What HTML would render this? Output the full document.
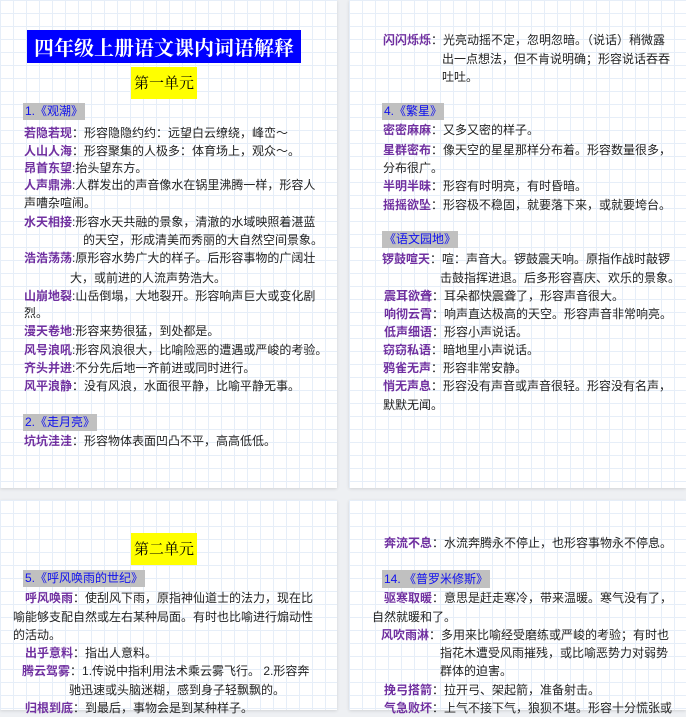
<!DOCTYPE html>
<html><head><meta charset="utf-8"><style>
body{margin:0;width:686px;height:710px;background:#eef0f3;position:relative;overflow:hidden;font-family:"Liberation Sans","Noto Sans CJK SC",sans-serif;font-size:12px;color:#222}
.p{position:absolute;background-color:#fff;background-image:linear-gradient(#e6eef8 1px,transparent 1px),linear-gradient(90deg,#e6eef8 1px,transparent 1px);background-size:13px 13px;box-shadow:0 1px 3px rgba(0,0,0,.12)}
.l{position:absolute;white-space:nowrap;line-height:18px;height:18px}
b{color:#7030a0;font-weight:bold}
.h{position:absolute;background:#c0c0c0;color:#1010ee;line-height:17px;height:17px;padding:0 2px;white-space:nowrap}
.y{position:absolute;background:#ffff00;color:#000;font-family:"Noto Serif CJK SC",serif;font-size:15px;line-height:32px;text-align:center;width:66px;height:32px;white-space:nowrap;letter-spacing:0}
</style></head><body>
<div class="p" style="left:0;top:0;width:337px;height:488px"></div>
<div class="p" style="left:349px;top:0;width:337px;height:488px"></div>
<div class="p" style="left:0;top:500px;width:337px;height:210px"></div>
<div class="p" style="left:349px;top:500px;width:337px;height:210px"></div>

<div style="position:absolute;left:27px;top:30px;width:274px;height:33px;background:#0000ff;color:#fff;font-family:'Noto Serif CJK SC',serif;font-weight:bold;font-size:20px;line-height:33px;text-align:center;white-space:nowrap;overflow:hidden">四年级上册语文课内词语解释</div>
<div class="y" style="left:131px;top:67px">第一单元</div>
<div class="h" style="left:23px;top:103px">1.《观潮》</div>
<div class="l" style="left:24px;top:124px"><b>若隐若现</b>：形容隐隐约约：远望白云缭绕，峰峦～</div>
<div class="l" style="left:24px;top:142px"><b>人山人海</b>：形容聚集的人极多：体育场上，观众～。</div>
<div class="l" style="left:24px;top:159px"><b>昂首东望</b>:抬头望东方。</div>
<div class="l" style="left:24px;top:176px"><b>人声鼎沸</b>:人群发出的声音像水在锅里沸腾一样，形容人</div>
<div class="l" style="left:24px;top:194px">声嘈杂喧闹。</div>
<div class="l" style="left:24px;top:213px"><b>水天相接</b>:形容水天共融的景象，清澈的水域映照着湛蓝</div>
<div class="l" style="left:83px;top:231px">的天空，形成清美而秀丽的大自然空间景象。</div>
<div class="l" style="left:24px;top:249px"><b>浩浩荡荡</b>:原形容水势广大的样子。后形容事物的广阔壮</div>
<div class="l" style="left:70px;top:269px">大，或前进的人流声势浩大。</div>
<div class="l" style="left:24px;top:287px"><b>山崩地裂</b>:山岳倒塌，大地裂开。形容响声巨大或变化剧</div>
<div class="l" style="left:24px;top:304px">烈。</div>
<div class="l" style="left:24px;top:322px"><b>漫天卷地</b>:形容来势很猛，到处都是。</div>
<div class="l" style="left:24px;top:341px"><b>风号浪吼</b>:形容风浪很大，比喻险恶的遭遇或严峻的考验。</div>
<div class="l" style="left:24px;top:359px"><b>齐头并进</b>:不分先后地一齐前进或同时进行。</div>
<div class="l" style="left:24px;top:377px"><b>风平浪静</b>：没有风浪，水面很平静，比喻平静无事。</div>
<div class="h" style="left:23px;top:414px">2.《走月亮》</div>
<div class="l" style="left:24px;top:432px"><b>坑坑洼洼</b>：形容物体表面凹凸不平，高高低低。</div>

<div class="l" style="left:383px;top:31px"><b>闪闪烁烁</b>：光亮动摇不定，忽明忽暗。（说话）稍微露</div>
<div class="l" style="left:442px;top:50px">出一点想法，但不肯说明确；形容说话吞吞</div>
<div class="l" style="left:442px;top:68px">吐吐。</div>
<div class="h" style="left:382px;top:103px">4.《繁星》</div>
<div class="l" style="left:383px;top:121px"><b>密密麻麻</b>：又多又密的样子。</div>
<div class="l" style="left:383px;top:141px"><b>星群密布</b>：像天空的星星那样分布着。形容数量很多，</div>
<div class="l" style="left:383px;top:159px">分布很广。</div>
<div class="l" style="left:383px;top:177px"><b>半明半昧</b>：形容有时明亮，有时昏暗。</div>
<div class="l" style="left:383px;top:196px"><b>摇摇欲坠</b>：形容极不稳固，就要落下来，或就要垮台。</div>
<div class="h" style="left:382px;top:231px">《语文园地》</div>
<div class="l" style="left:382px;top:250px"><b>锣鼓喧天</b>：喧：声音大。锣鼓震天响。原指作战时敲锣</div>
<div class="l" style="left:440px;top:269px">击鼓指挥进退。后多形容喜庆、欢乐的景象。</div>
<div class="l" style="left:384px;top:287px"><b>震耳欲聋</b>：耳朵都快震聋了，形容声音很大。</div>
<div class="l" style="left:384px;top:305px"><b>响彻云霄</b>：响声直达极高的天空。形容声音非常响亮。</div>
<div class="l" style="left:384px;top:323px"><b>低声细语</b>：形容小声说话。</div>
<div class="l" style="left:383px;top:341px"><b>窃窃私语</b>：暗地里小声说话。</div>
<div class="l" style="left:383px;top:359px"><b>鸦雀无声</b>：形容非常安静。</div>
<div class="l" style="left:383px;top:377px"><b>悄无声息</b>：形容没有声音或声音很轻。形容没有名声，</div>
<div class="l" style="left:383px;top:396px">默默无闻。</div>

<div class="y" style="left:131px;top:533px">第二单元</div>
<div class="h" style="left:23px;top:570px">5.《呼风唤雨的世纪》</div>
<div class="l" style="left:25px;top:589px"><b>呼风唤雨</b>：使刮风下雨，原指神仙道士的法力，现在比</div>
<div class="l" style="left:13px;top:608px">喻能够支配自然或左右某种局面。有时也比喻进行煽动性</div>
<div class="l" style="left:13px;top:626px">的活动。</div>
<div class="l" style="left:25px;top:644px"><b>出乎意料</b>：指出人意料。</div>
<div class="l" style="left:22px;top:662px"><b>腾云驾雾</b>：1.传说中指利用法术乘云雾飞行。 2.形容奔</div>
<div class="l" style="left:69px;top:681px">驰迅速或头脑迷糊，感到身子轻飘飘的。</div>
<div class="l" style="left:25px;top:699px"><b>归根到底</b>：到最后，事物会是到某种样子。</div>

<div class="l" style="left:384px;top:534px"><b>奔流不息</b>：水流奔腾永不停止，也形容事物永不停息。</div>
<div class="h" style="left:382px;top:570px;height:18px;line-height:18px">14. 《普罗米修斯》</div>
<div class="l" style="left:384px;top:589px"><b>驱寒取暖</b>：意思是赶走寒冷，带来温暖。寒气没有了，</div>
<div class="l" style="left:372px;top:608px">自然就暖和了。</div>
<div class="l" style="left:381px;top:626px"><b>风吹雨淋</b>：多用来比喻经受磨练或严峻的考验；有时也</div>
<div class="l" style="left:440px;top:644px">指花木遭受风雨摧残，或比喻恶势力对弱势</div>
<div class="l" style="left:440px;top:662px">群体的迫害。</div>
<div class="l" style="left:384px;top:681px"><b>挽弓搭箭</b>：拉开弓、架起箭，准备射击。</div>
<div class="l" style="left:384px;top:699px"><b>气急败坏</b>：上气不接下气，狼狈不堪。形容十分慌张或</div>
</body></html>
